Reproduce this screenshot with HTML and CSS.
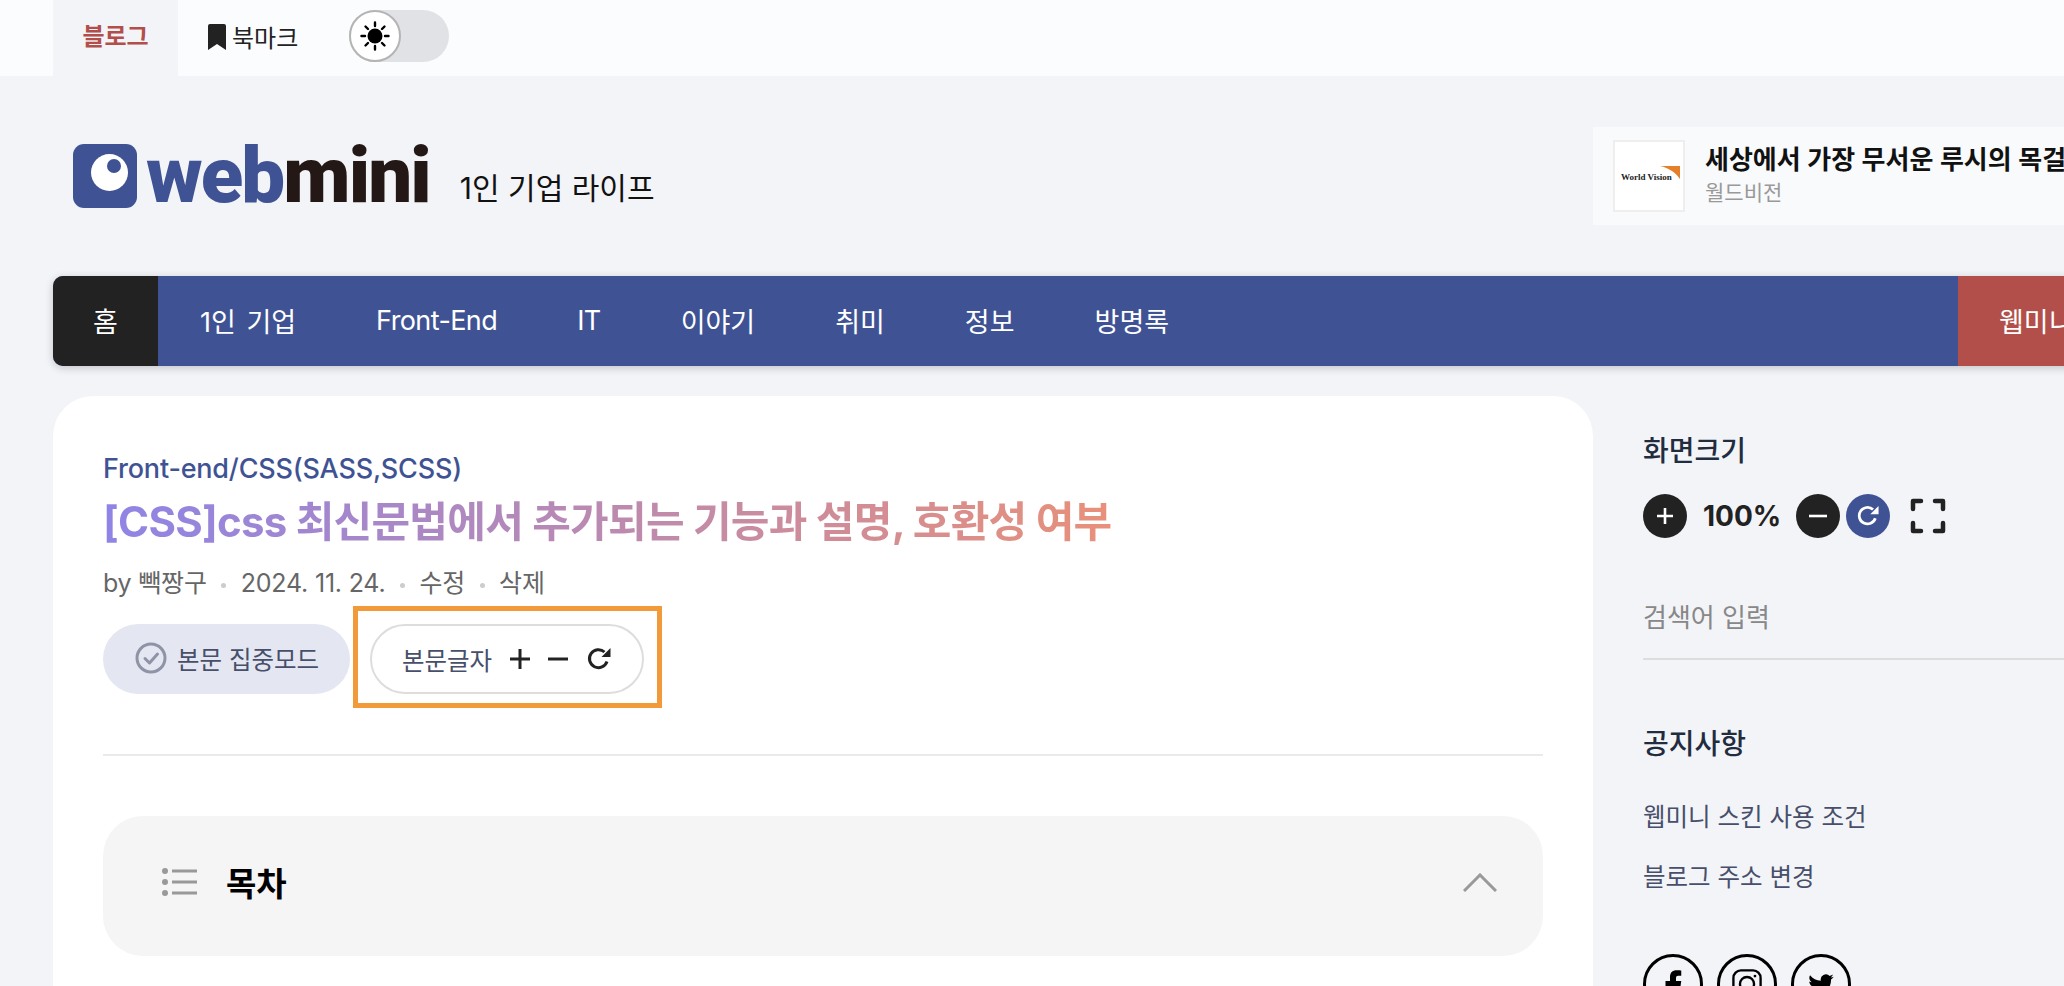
FILE: index.html
```html
<!DOCTYPE html>
<html lang="ko">
<head>
  <meta charset="UTF-8">
  <title>[CSS]css 최신문법에서 추가되는 기능과 설명, 호환성 여부</title>
  <link rel="stylesheet" href="styles.css">
</head>
<body>
  <div class="topbar">
    <a class="tab tab-on">블로그</a>
    <a class="tab tab-mark">
      <svg width="18" height="26" viewBox="0 0 18 26"><path d="M0 2a2 2 0 0 1 2-2h14a2 2 0 0 1 2 2v24l-9-6-9 6z" fill="#222"/></svg>
      북마크
    </a>
    <div class="toggle">
      <span class="knob">
        <svg width="30" height="30" viewBox="0 0 30 30" stroke="#000" stroke-width="2.4" stroke-linecap="round">
          <circle cx="15" cy="15" r="7.5" fill="#000" stroke="none"/>
          <path d="M15 1.500v3.500M15 25v3.500M1.500 15H5M25 15h3.500M5.500 5.500l2.500 2.500M22 22l2.500 2.500M5.500 24.500L8 22M22 8l2.500-2.500"/>
        </svg>
      </span>
    </div>
  </div>

  <div class="wrap">
    <header class="head">
      <div class="brand">
        <svg class="brand-icon" width="64" height="64" viewBox="0 0 64 64">
          <rect width="64" height="64" rx="11" fill="#3f5394"/>
          <circle cx="36.500" cy="28.500" r="18.500" fill="#fff"/>
          <circle cx="41" cy="22" r="7" fill="#3f5394"/>
        </svg>
        <span class="word"><span class="word-blue">web</span>mini</span>
        <span class="tagline">1인 기업 라이프</span>
      </div>
      <div class="ad">
        <div class="ad-thumb">
          <span class="ad-logo">World Vision</span>
          <svg class="ad-swoosh" width="20" height="13" viewBox="0 0 20 13"><path d="M0 0h20v13C15 6 9 2 0 0z" fill="#e57f2a"/></svg>
        </div>
        <div class="ad-text">
          <strong>세상에서 가장 무서운 루시의 목걸이</strong>
          <span>월드비전</span>
        </div>
      </div>
    </header>

    <nav class="nav">
      <a class="nav-home">홈</a>
      <ul class="nav-list">
        <li>1인 기업</li>
        <li class="nav-latin">Front-End</li>
        <li class="nav-latin">IT</li>
        <li>이야기</li>
        <li>취미</li>
        <li>정보</li>
        <li>방명록</li>
      </ul>
      <a class="nav-red">웹미니 스킨</a>
    </nav>

    <div class="main">
      <article class="card">
        <a class="crumb">Front-end/CSS(SASS,SCSS)</a>
        <h1 class="title"><span>[CSS]css 최신문법에서 추가되는 기능과 설명, 호환성 여부</span></h1>
        <div class="meta">
          <span>by 빽짱구</span><i></i><span>2024. 11. 24.</span><i></i><span>수정</span><i></i><span>삭제</span>
        </div>
        <div class="tools">
          <button class="btn-focus">
            <svg width="32" height="32" viewBox="0 0 32 32" fill="none" stroke="#8e93a6" stroke-width="3"><circle cx="16" cy="16" r="14"/><path d="M10 16.500l4.500 4.500 8-9" stroke-linecap="round" stroke-linejoin="round"/></svg>
            본문 집중모드
          </button>
          <div class="mark-box">
            <div class="btn-size">
              <span>본문글자</span>
              <svg width="22" height="22" viewBox="0 0 22 22" stroke="#222" stroke-width="3"><path d="M11 1v20M1 11h20"/></svg>
              <svg width="20" height="22" viewBox="0 0 20 22" stroke="#222" stroke-width="3"><path d="M0 11h20"/></svg>
              <svg class="size-reset" width="24" height="24" viewBox="0 0 24 24" fill="none" stroke="#222" stroke-width="3"><path d="M20 14.500A9 9 0 1 1 17.500 5"/><path d="M23.500 1v9h-9z" fill="#222" stroke="none"/></svg>
            </div>
          </div>
        </div>
        <hr class="rule">
        <section class="toc">
          <div class="toc-left">
            <svg width="35" height="28" viewBox="0 0 35 28" fill="#999"><circle cx="3" cy="3" r="3"/><circle cx="3" cy="14" r="3"/><circle cx="3" cy="25" r="3"/><rect x="10" y="1.500" width="25" height="3"/><rect x="10" y="12.500" width="25" height="3"/><rect x="10" y="23.500" width="25" height="3"/></svg>
            <strong>목차</strong>
          </div>
          <svg width="34" height="19" viewBox="0 0 34 19" fill="none" stroke="#999" stroke-width="3"><path d="M1 18L17 2l16 16"/></svg>
        </section>
      </article>

      <aside class="side">
        <h3 class="side-title">화면크기</h3>
        <div class="zoom">
          <button class="round"><svg width="20" height="20" viewBox="0 0 20 20" stroke="#fff" stroke-width="2.600"><path d="M10 2v16M2 10h16"/></svg></button>
          <b class="zoom-val">100%</b>
          <button class="round"><svg width="20" height="20" viewBox="0 0 20 20" stroke="#fff" stroke-width="2.600"><path d="M1 10h18"/></svg></button>
          <button class="round round-blue"><svg width="22" height="22" viewBox="0 0 24 24" fill="none" stroke="#fff" stroke-width="3"><path d="M20 14.500A9 9 0 1 1 17.500 5"/><path d="M23.500 1v9h-9z" fill="#fff" stroke="none"/></svg></button>
          <svg class="full" width="36" height="36" viewBox="0 0 36 36" fill="none" stroke="#222" stroke-width="4.500" stroke-linecap="round" stroke-linejoin="round"><path d="M11 3H3v8M25 3h8v8M3 25v8h8M33 25v8h-8"/></svg>
        </div>
        <div class="search">검색어 입력</div>
        <h3 class="side-title notice">공지사항</h3>
        <ul class="notice-list">
          <li>웹미니 스킨 사용 조건</li>
          <li>블로그 주소 변경</li>
        </ul>
        <div class="social">
          <span class="sns"><svg width="18" height="30" viewBox="0 0 24 40"><path d="M16 40V23h6l1-7h-7v-4c0-2 1-3 3-3h4V2c-1 0-3-.300-6-.300-6 0-9 3.600-9 9V16H2v7h6v17z" fill="#000"/></svg></span>
          <span class="sns"><svg width="30" height="30" viewBox="0 0 32 32" fill="none" stroke="#000" stroke-width="2.500"><rect x="1.500" y="1.500" width="29" height="29" rx="8"/><circle cx="16" cy="16" r="7.500"/><circle cx="24.500" cy="7.500" r="1.500" fill="#000" stroke="none"/></svg></span>
          <span class="sns"><svg width="26" height="21" viewBox="0 0 34 28"><path d="M34 3.500c-1.300.600-2.600 1-4 1.100 1.400-.900 2.500-2.200 3-3.800-1.300.800-2.800 1.400-4.400 1.700A7 7 0 0 0 16.800 9C11 8.700 5.900 6 2.400 1.600c-1.900 3.200-.900 7.300 2.200 9.300-1.100 0-2.200-.300-3.200-.900 0 3.400 2.400 6.300 5.600 7-1 .300-2.100.300-3.100.100.900 2.800 3.500 4.800 6.500 4.800A14 14 0 0 1 0 24.800 20 20 0 0 0 10.700 28c12.900 0 20.100-10.900 19.700-20.700 1.400-1 2.600-2.300 3.600-3.800z" fill="#000"/></svg></span>
        </div>
      </aside>
    </div>
  </div>
</body>
</html>
```

FILE: styles.css
```css
html, body {
  margin: 0;
  height: 986px;
  overflow: hidden;
}

body {
  background-color: #f3f4f8;
  color: #222;
  font-family: Inter, "Noto Sans CJK KR", sans-serif;
}

ul {
  list-style: none;
  margin: 0;
  padding: 0;
}

button {
  font-family: inherit;
  border: none;
  padding: 0;
  cursor: pointer;
}

/* top bar */
.topbar {
  display: flex;
  align-items: center;
  height: 76px;
  padding-left: 53px;
  background-color: #fbfcfe;
}

.tab {
  display: flex;
  align-items: center;
  box-sizing: border-box;
  height: 100%;
  font-size: 24px;
}

.tab-on {
  width: 125px;
  padding-bottom: 7px;
  justify-content: center;
  background-color: #f3f4f8;
  color: #b24f4b;
  font-weight: 700;
}

.tab-mark {
  gap: 6px;
  margin-left: 30px;
  padding-bottom: 3px;
  color: #222;
}

.toggle {
  width: 100px;
  height: 52px;
  margin: -4px 0 0 51px;
  border-radius: 26px;
  background-color: #e1e2e5;
}

.knob {
  display: flex;
  align-items: center;
  justify-content: center;
  box-sizing: border-box;
  width: 52px;
  height: 52px;
  border: 2px solid #b4b4b4;
  border-radius: 50%;
  background-color: #fff;
}

/* header */
.wrap {
  width: 2400px;
  padding-left: 53px;
}

.head {
  display: flex;
  align-items: center;
  height: 200px;
}

.brand {
  display: flex;
  align-items: flex-end;
  box-sizing: border-box;
  width: 1540px;
  height: 64px;
  padding-left: 20px;
}

.brand-icon {
  display: block;
}

.word {
  margin-left: 9px;
  font-family: Roboto, sans-serif;
  font-size: 78px;
  line-height: 64px;
  font-weight: 900;
  letter-spacing: -1.9px;
  color: #231815;
}

.word-blue {
  color: #3f5394;
}

.tagline {
  margin-left: 30px;
  font-size: 30px;
  line-height: 40px;
  color: #111;
}

.ad {
  display: flex;
  align-items: center;
  gap: 20px;
  width: 800px;
  height: 98px;
  padding-left: 20px;
  background-color: #f9fafc;
}

.ad-thumb {
  position: relative;
  box-sizing: border-box;
  width: 72px;
  height: 72px;
  border: 2px solid #eee;
  background-color: #fff;
}

.ad-logo {
  position: absolute;
  left: 6px;
  top: 30px;
  font-family: "Liberation Serif", serif;
  font-size: 9px;
  font-weight: 700;
  white-space: nowrap;
  color: #222;
}

.ad-swoosh {
  position: absolute;
  right: 3px;
  top: 24px;
}

.ad-text {
  display: flex;
  flex-direction: column;
  gap: 2px;
  padding-bottom: 5px;
}

.ad-text strong {
  font-size: 26px;
  line-height: 36px;
  font-weight: 600;
  color: #111;
  white-space: nowrap;
}

.ad-text span {
  font-size: 21px;
  line-height: 26px;
  color: #999;
}

/* nav */
.nav {
  display: flex;
  height: 90px;
  background-color: #3f5394;
  border-radius: 10px 0 0 10px;
  box-shadow: 0 2px 8px rgba(0, 0, 0, 0.2);
  font-size: 27px;
  color: #fff;
}

.nav-home {
  display: flex;
  align-items: center;
  justify-content: center;
  width: 105px;
  padding-bottom: 2px;
  box-sizing: border-box;
  background-color: #222;
  border-radius: 10px 0 0 10px;
}

.nav-list {
  display: flex;
  align-items: center;
  gap: 80px;
  box-sizing: border-box;
  width: 1800px;
  padding: 0 0 2px 42px;
  word-spacing: 3px;
}

.nav-latin {
  letter-spacing: -0.6px;
}

.nav-red {
  display: flex;
  align-items: center;
  width: 300px;
  padding: 0 0 2px 41px;
  background-color: #b24f4b;
}

/* content */
.main {
  display: flex;
  gap: 50px;
  margin-top: 30px;
}

.card {
  box-sizing: border-box;
  flex: none;
  width: 1540px;
  height: 800px;
  padding: 57px 50px;
  background-color: #fff;
  border-radius: 40px;
}

.crumb {
  display: block;
  font-size: 27px;
  line-height: 32px;
  font-weight: 500;
  letter-spacing: -0.2px;
  color: #3f5394;
}

.title {
  margin: 9px 0 0;
  font-size: 42px;
  line-height: 56px;
  font-weight: 700;
  letter-spacing: -0.75px;
}

.title span {
  background: linear-gradient(90deg, #8f84e6, #e8907a);
  -webkit-background-clip: text;
  background-clip: text;
  color: transparent;
}

.meta {
  display: flex;
  align-items: center;
  margin-top: 17px;
  font-size: 25px;
  line-height: 32px;
  letter-spacing: -0.2px;
  color: #666;
}

.meta i {
  width: 5px;
  height: 5px;
  margin: 4px 14.5px 0;
  border-radius: 50%;
  background-color: #ccc;
}

.tools {
  display: flex;
  align-items: flex-start;
  gap: 3px;
  margin-top: 7px;
}

.btn-focus {
  display: flex;
  align-items: center;
  gap: 10px;
  box-sizing: border-box;
  width: 247px;
  height: 70px;
  margin-top: 18px;
  padding: 0 0 2px 32px;
  border-radius: 35px;
  background-color: #e4e7f1;
  font-size: 24.5px;
  color: #474f6a;
}

.mark-box {
  padding: 13px 13px 9px 12px;
  border: 5px solid #f2993a;
}

.btn-size {
  display: flex;
  align-items: center;
  box-sizing: border-box;
  width: 274px;
  height: 70px;
  padding-left: 30px;
  border: 2px solid #ddd;
  border-radius: 35px;
  font-size: 24.5px;
  color: #474f6a;
}

.btn-size svg {
  margin-left: 17px;
}

.btn-size .size-reset {
  margin-left: 19px;
}

.rule {
  margin: 46px 0 0;
  border: none;
  border-top: 2px solid #eaeaea;
}

.toc {
  display: flex;
  align-items: center;
  justify-content: space-between;
  box-sizing: border-box;
  height: 140px;
  margin-top: 60px;
  padding: 0 46px 8px 59px;
  border-radius: 40px;
  background-color: #f5f5f5;
}

.toc-left {
  display: flex;
  align-items: center;
  gap: 29px;
}

.toc-left strong {
  font-size: 33px;
  font-weight: 700;
  color: #000;
}

/* sidebar */
.side {
  width: 560px;
  padding-top: 37px;
}

.side-title {
  margin: 0;
  font-size: 28px;
  line-height: 36px;
  font-weight: 500;
  color: #222c3f;
}

.zoom {
  display: flex;
  align-items: center;
  margin-top: 25px;
}

.round {
  display: flex;
  align-items: center;
  justify-content: center;
  width: 44px;
  height: 44px;
  border-radius: 50%;
  background-color: #222;
}

.round-blue {
  margin-left: 6px;
  background-color: #3f5394;
}

.zoom-val {
  width: 93px;
  padding-left: 16px;
  font-size: 28px;
  font-weight: 700;
}

.full {
  margin-left: 20px;
}

.search {
  height: 62px;
  margin-top: 58px;
  border-bottom: 2px solid #ddd;
  font-size: 26px;
  line-height: 44px;
  color: #888;
}

.notice {
  margin-top: 66px;
}

.notice-list {
  margin-top: 39px;
  font-size: 24.5px;
  line-height: 32px;
  color: #474f6a;
}

.notice-list li + li {
  margin-top: 28px;
}

.social {
  display: flex;
  gap: 14px;
  margin-top: 61px;
}

.sns {
  display: flex;
  align-items: center;
  justify-content: center;
  box-sizing: border-box;
  width: 60px;
  height: 60px;
  border: 3px solid #000;
  border-radius: 50%;
}
```
